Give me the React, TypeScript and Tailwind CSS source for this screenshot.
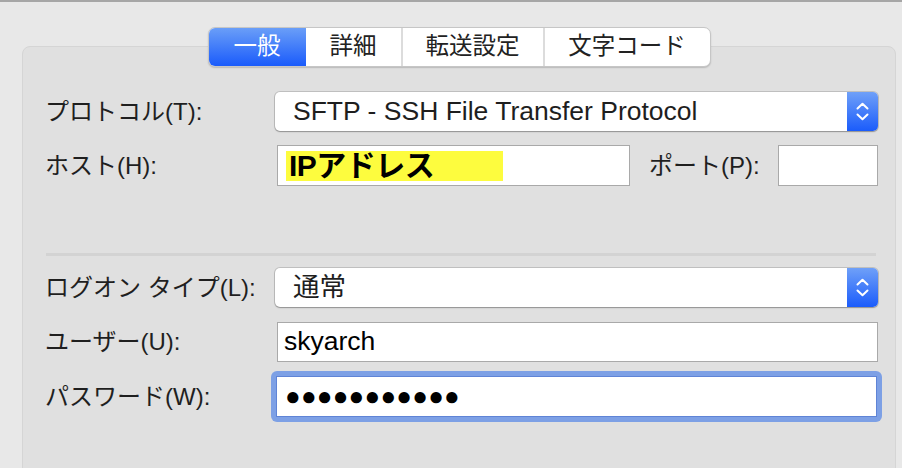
import React from "react";

const jp = "font-['Liberation_Sans','Noto_Sans_CJK_JP',sans-serif]";

function Stepper() {
  return (
    <div className="flex h-full w-[31px] flex-col items-center justify-center gap-[3px] rounded-r-[5px] bg-[linear-gradient(180deg,#6fa0f8,#1b5cfb)]">
      <svg width="13" height="8" viewBox="0 0 13 8" fill="none">
        <path d="M1.5 6.5 6.5 1.8l5 4.7" stroke="white" strokeWidth="2" strokeLinecap="round" strokeLinejoin="round" />
      </svg>
      <svg width="13" height="8" viewBox="0 0 13 8" fill="none">
        <path d="M1.5 1.5 6.5 6.2l5-4.7" stroke="white" strokeWidth="2" strokeLinecap="round" strokeLinejoin="round" />
      </svg>
    </div>
  );
}

function Select({ value }: { value: string }) {
  return (
    <div className="flex h-[39px] flex-1 items-stretch rounded-[5px] bg-white shadow-[0_0_0_1px_rgba(0,0,0,0.14),0_1px_1.5px_rgba(0,0,0,0.25)]">
      <div className="flex flex-1 items-center pl-[18px] text-[26.5px] text-[#1e1e1e]">{value}</div>
      <Stepper />
    </div>
  );
}

function Row({ label, className, children }: { label: string; className: string; children: React.ReactNode }) {
  return (
    <div className={`flex items-center ${className}`}>
      <div className="w-[230px] shrink-0 text-[24px] text-[#1f1f1f]">{label}</div>
      {children}
    </div>
  );
}

const tabs = [
  { name: "一般", w: "w-[97px]" },
  { name: "詳細", w: "w-[95px]" },
  { name: "転送設定", w: "w-[142px]" },
  { name: "文字コード", w: "w-[167px]" },
];

export default function App() {
  return (
    <div className={`h-[468px] w-[902px] overflow-hidden border-t-2 border-[#a6a6a6] bg-[#e8e8e8] ${jp}`}>
      <div className="pl-[22px] pr-[6px] pt-[25px]">
        <div className="relative z-10 -mb-[21px] flex justify-center">
          <div className="flex h-[40px] overflow-hidden rounded-[7px] border border-[#c6c6c6] bg-white shadow-[0_1px_1.5px_rgba(0,0,0,0.18)]">
            {tabs.map((t, i) => (
              <div
                key={t.name}
                className={`flex items-center justify-center text-[23.5px] ${t.w} ${
                  i === 0
                    ? "bg-[linear-gradient(180deg,#6a9ef8,#1a5bfb)] text-white"
                    : i === 1
                      ? "text-[#222]"
                      : "border-l-2 border-[#dcdcdc] text-[#222]"
                }`}
              >
                {t.name}
              </div>
            ))}
          </div>
        </div>

        <div className="h-[460px] rounded-[8px] border border-[#d5d5d5] bg-[#e0e0e0] pl-[22px] pr-[17px] pt-[45px]">
          <Row label="プロトコル(T):" className="h-[39px]">
            <Select value="SFTP - SSH File Transfer Protocol" />
          </Row>

          <Row label="ホスト(H):" className="mt-[14px] h-[41px]">
            <div className="ml-[2px] flex h-full flex-1 items-center">
              <div className="flex h-full w-[353px] items-center border border-[#a9a9a9] bg-white pl-[8px]">
                <span className="flex h-[30px] w-[217px] items-center bg-[#fdfc3e] pl-[3px] text-[30px] font-bold leading-none tracking-[-0.5px] text-black">
                  IPアドレス
                </span>
              </div>
              <div className="ml-[19px] text-[24px] text-[#1f1f1f]">ポート(P):</div>
              <div className="ml-auto h-full w-[100px] border border-[#a9a9a9] bg-white" />
            </div>
          </Row>

          <div className="ml-[1px] mr-[2px] mt-[67px] h-[3px] bg-[#d3d3d3]" />

          <Row label="ログオン タイプ(L):" className="mt-[12px] h-[39px]">
            <Select value="通常" />
          </Row>

          <Row label="ユーザー(U):" className="mt-[15px] h-[40px]">
            <div className="ml-[2px] flex h-full flex-1 items-center border border-[#a9a9a9] bg-white pl-[6px] text-[26.5px] text-black">
              skyarch
            </div>
          </Row>

          <Row label="パスワード(W):" className="mt-[9px] h-[51px]">
            <div className="-ml-[4px] -mr-[4px] flex-1 rounded-[6px] bg-[#7da0e5] p-[5px]">
              <div className="flex h-[41px] items-center border border-[#5f84d6] bg-white pl-[8px] text-[26px] tracking-[0.2px] text-black">
                ●●●●●●●●●●●
              </div>
            </div>
          </Row>
        </div>
      </div>
    </div>
  );
}
